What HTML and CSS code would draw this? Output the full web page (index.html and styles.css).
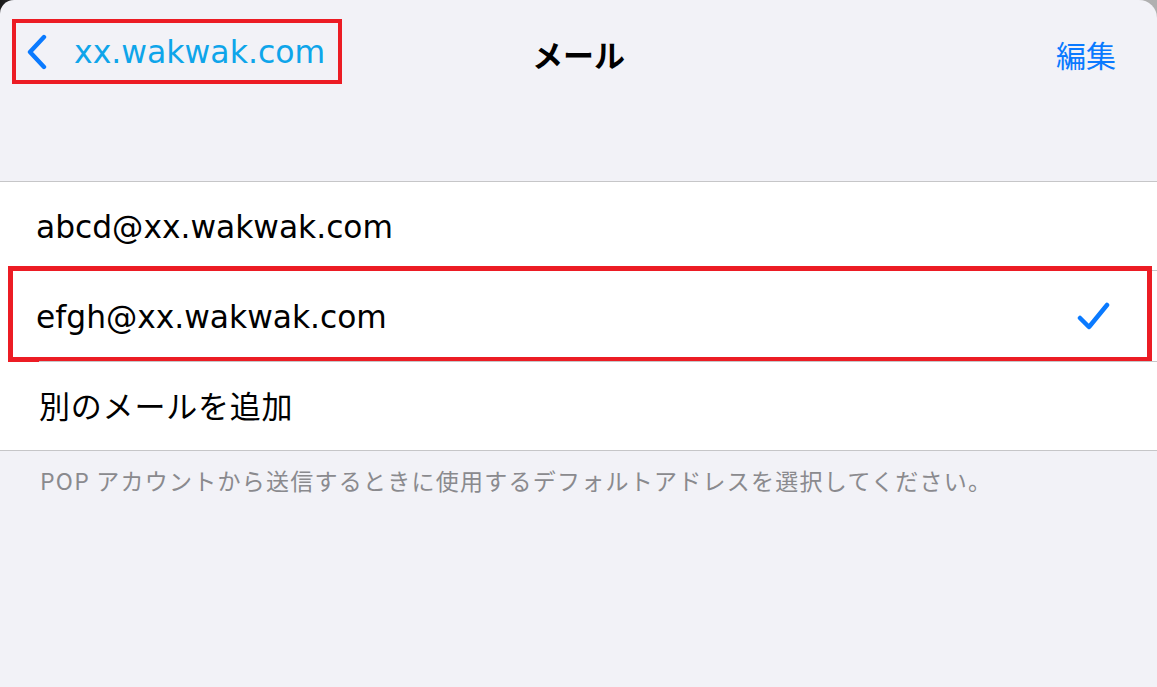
FILE: index.html
```html
<!DOCTYPE html>
<html lang="ja">
<head>
<meta charset="utf-8">
<title>メール</title>
<link rel="stylesheet" href="styles.css">
</head>
<body>
<div class="screen">
  <header class="navbar">
    <div class="nav-left">
      <a class="back">
        <svg class="chev" width="22" height="36" viewBox="0 0 22 36"><path d="M18 3 L4 18 L18 33" fill="none" stroke="#0a7aff" stroke-width="4.4" stroke-linecap="round" stroke-linejoin="round"/></svg>
        <span class="back-text">xx.wakwak.com</span>
      </a>
    </div>
    <h1 class="title">メール</h1>
    <div class="nav-right"><span class="edit">編集</span></div>
  </header>
  <ul class="list">
    <li class="row"><span class="label latin">abcd@xx.wakwak.com</span></li>
    <li class="row selected"><span class="label latin">efgh@xx.wakwak.com</span>
      <svg class="check" width="34" height="30" viewBox="0 0 34 30"><path d="M3 17 L12 26 L30 4" fill="none" stroke="#0a7aff" stroke-width="4.5" stroke-linecap="round" stroke-linejoin="round"/></svg>
    </li>
    <li class="row"><span class="label jp">別のメールを追加</span></li>
  </ul>
  <p class="footer">POP アカウントから送信するときに使用するデフォルトアドレスを選択してください。</p>
</div>
</body>
</html>
```
FILE: styles.css
```css
html, body {
  margin: 0;
  padding: 0;
  height: 100%;
}
body {
  background: linear-gradient(90deg, #1a1a1a 0%, #9a9a9a 8%, #b0b0b0 100%);
  font-family: "Noto Sans CJK JP", sans-serif;
  overflow: hidden;
}
.screen {
  background: #f2f2f7;
  min-height: 100%;
  border-radius: 14px 18px 0 0;
}
.navbar {
  height: 110px;
  display: grid;
  grid-template-columns: 1fr auto 1fr;
  align-items: start;
}
.nav-left {
  padding: 19px 0 0 12px;
}
.back {
  display: flex;
  align-items: center;
  box-sizing: border-box;
  width: 330px;
  height: 65px;
  border: 4px solid #ec1c24;
  padding-left: 10px;
  gap: 26px;
}
.chev {
  display: block;
}
.back-text {
  font-family: "DejaVu Sans", sans-serif;
  font-size: 31.5px;
  color: #0ea5ea;
  line-height: 1;
  margin-top: 2px;
}
.title {
  margin: 0;
  padding-top: 32px;
  font-size: 31px;
  font-weight: 700;
  color: #000;
  line-height: 44px;
}
.nav-right {
  display: flex;
  justify-content: flex-end;
  padding: 32px 41px 0 0;
}
.edit {
  font-size: 30px;
  color: #0a7aff;
  line-height: 44px;
}
.list {
  list-style: none;
  margin: 71px 0 0 0;
  padding: 0;
  background: #fff;
  border-top: 1px solid #c6c6c8;
  border-bottom: 1px solid #c6c6c8;
}
.row {
  position: relative;
  height: 88px;
  display: flex;
  align-items: center;
  justify-content: space-between;
  padding: 0 46px 0 36px;
  margin-left: 0;
}
.row + .row {
  border-top: 1px solid #c6c6c8;
  margin-left: 39px;
  padding-left: 0;
}
.label {
  font-size: 30px;
  color: #000;
  line-height: 1;
}
.latin {
  font-family: "DejaVu Sans", sans-serif;
  font-size: 31.3px;
  margin-top: 3px;
}
.row + .row .latin {
  margin-left: -3px;
}
.jp {
  font-size: 31px;
  letter-spacing: 0.8px;
  margin-top: -4px;
}
.row.selected {
  height: 90px;
}
.row.selected::after {
  content: "";
  position: absolute;
  left: -31px;
  right: 5px;
  top: -5px;
  bottom: -1px;
  border: 5px solid #ec1c24;
  pointer-events: none;
}
.check {
  display: block;
}
.footer {
  margin: 0;
  padding: 13px 0 0 40px;
  font-size: 23px;
  letter-spacing: 1.25px;
  color: #8a8a8e;
  line-height: 32px;
}
```
